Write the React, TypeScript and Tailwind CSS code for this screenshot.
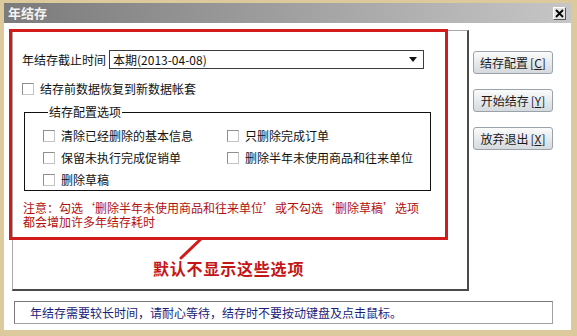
import React from "react";

function Box() {
  return <span className="w-[12px] h-[12px] shrink-0 bg-white border border-[#8e8e8e] border-r-[#c4c4c4] border-b-[#c4c4c4]" />;
}

function Check({ label }: { label: string }) {
  return (
    <div className="flex items-center gap-[6px] h-[14px]">
      <Box />
      <span className="text-[12px] leading-[14px] text-[#111]">{label}</span>
    </div>
  );
}

function Btn({ text, k }: { text: string; k: string }) {
  return (
    <button className="w-[80px] h-[23px] rounded-[3px] border border-[#9aa3ab] bg-gradient-to-b from-[#fbfbfb] to-[#d5dade] text-[12px] leading-[14px] text-[#1a1a1a] flex items-center justify-center">
      {text}
      <span className="ml-[2px]">[<span className="underline">{k}</span>]</span>
    </button>
  );
}

export default function App() {
  return (
    <div className="w-[577px] h-[336px] bg-[#dcca9c] pt-[3px] pl-[4px] pr-[6px] pb-[6px] flex flex-col font-['Noto_Sans_CJK_SC','Liberation_Sans',sans-serif]">
      <div className="h-[20px] shrink-0 bg-gradient-to-r from-[#7b7b7b] to-[#c6c6c6] flex items-center justify-between pl-[4px] pr-[5px]">
        <span className="text-[13px] leading-[16px] font-bold text-[#f2f2f2]">年结存</span>
        <span className="w-[13px] h-[13px] bg-[#e4e4e4] border border-[#fff] border-r-[#555] border-b-[#555] flex items-center justify-center">
          <svg width="9" height="9" viewBox="0 0 9 9">
            <path d="M1 1 L8 8 M8 1 L1 8" stroke="#000" strokeWidth="1.8" />
          </svg>
        </span>
      </div>

      <div className="flex-1 bg-white flex flex-col">
        <div className="flex pt-[7px]">
          <div className="relative ml-[8px] w-[457px] h-[261px] border-t border-l border-[#a8a8a8] border-r-2 border-b-2 border-r-[#4a4a4a] border-b-[#4a4a4a] flex flex-col">
            <div className="-ml-[4px] -mt-[2px] w-[439px] h-[211px] border-[3px] border-[#d21c1c] flex flex-col">
              <div className="flex items-center mt-[18px] pl-[10px] h-[19px]">
                <span className="text-[12px] leading-[14px] text-[#111] w-[87px]">年结存截止时间</span>
                <div className="w-[315px] h-[19px] border border-[#3c3c3c] flex items-center justify-between pl-[3px] pr-[6px]">
                  <span className="text-[12px] leading-[14px] text-[#111]">本期(2013-04-08)</span>
                  <svg width="8" height="5" viewBox="0 0 8 5">
                    <polygon points="0,0 8,0 4,5" fill="#111" />
                  </svg>
                </div>
              </div>
              <div className="mt-[13px] pl-[10px]">
                <Check label="结存前数据恢复到新数据帐套" />
              </div>
              <fieldset className="ml-[12px] mt-[9px] w-[407px] border border-[#111] pl-[18px] pb-[3px]">
                <legend className="ml-[5px] px-[1px] text-[12px] leading-[14px] text-[#111]">结存配置选项</legend>
                <div className="grid grid-cols-[184px_1fr] gap-y-[8px] mt-[10px]">
                  <Check label="清除已经删除的基本信息" />
                  <Check label="只删除完成订单" />
                  <Check label="保留未执行完成促销单" />
                  <Check label="删除半年未使用商品和往来单位" />
                  <Check label="删除草稿" />
                </div>
              </fieldset>
              <div className="mt-[10px] pl-[11px] flex flex-col text-[12px] leading-[14px] text-[#b21010]">
                <span>注意：勾选‘删除半年未使用商品和往来单位’或不勾选‘删除草稿’选项</span>
                <span>都会增加许多年结存耗时</span>
              </div>
            </div>
            <svg className="absolute left-[166px] top-[206px]" width="26" height="24" viewBox="0 0 26 24">
              <path d="M23 1 L2 21" stroke="#d21c1c" strokeWidth="3" strokeLinecap="round" />
            </svg>
            <div className="mt-[19px] pl-[140px] text-[16px] leading-[18px] font-bold text-[#c41616] tracking-[0.8px]">
              默认不显示这些选项
            </div>
          </div>
          <div className="ml-[4px] mt-[21px] flex flex-col gap-[15px]">
            <Btn text="结存配置" k="C" />
            <Btn text="开始结存" k="Y" />
            <Btn text="放弃退出" k="X" />
          </div>
        </div>
        <div className="ml-[10px] mt-[10px] w-[539px] h-[23px] border border-[#7a7a7a] border-r-[#a0a0a0] border-b-[#a0a0a0] flex items-center pl-[15px]">
          <span className="text-[12px] leading-[14px] text-[#1c1c7a]">年结存需要较长时间，请耐心等待，结存时不要按动键盘及点击鼠标。</span>
        </div>
      </div>
    </div>
  );
}
